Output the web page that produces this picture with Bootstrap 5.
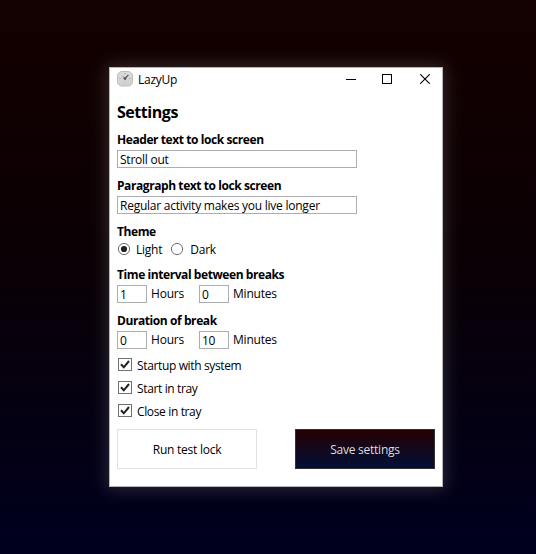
<!DOCTYPE html>
<html lang="en">
<head>
<meta charset="utf-8">
<meta name="viewport" content="width=device-width, initial-scale=1">
<title>LazyUp</title>
<link href="https://cdn.jsdelivr.net/npm/bootstrap@5.3.0/dist/css/bootstrap.min.css" rel="stylesheet">
<style>
  body { min-height: 554px; font: 12px/16px "Open Sans", "Noto Sans", sans-serif; color: #000; background: linear-gradient(#140000 0%, #0a0005 48%, #00001f 100%); letter-spacing: -.24px; overflow: hidden; }
  .app-window { width: 334px; height: 420px; margin: 67px 0 0 109px; border: 1px solid #b9b4b8; box-shadow: 0 0 16px 2px rgba(255,255,255,.16); }
  .title-bar { height: 24px; }
  .app-icon { margin: 0 5px 2px 7px; }
  .win-controls { padding-bottom: 2px; }
  .win-btn { width: 37px; }
  .win-btn.min-btn, .win-btn.close-btn { padding-left: 2px; }
  .content-area { padding: 0 7px; }
  .page-heading { font-size: 16px; line-height: 40px; height: 40px; letter-spacing: -.45px; }
  .field-label { height: 18px; line-height: 15px; font-weight: 700; letter-spacing: -.42px; }
  .field-row { height: 28px; }
  .last-row { height: 27px; }
  .theme-row { height: 25px; padding-right: 8px; }
  .radio-item { height: 14px; margin-right: 8px; }
  .radio-text { margin-left: 5px; padding-top: 1px; }
  .radio-item + .radio-item .radio-text { margin-left: 6px; }
  .text-box { height: 18px; border: 1px solid #abadb3; border-radius: 0; padding: 1px 2px 0; font: inherit; letter-spacing: inherit; line-height: 16px; color: #000; }
  .wide-box { width: 240px; }
  .num-box { width: 30px; }
  .unit-label { width: 52px; padding: 1px 0 0 4px; letter-spacing: -.2px; }
  .check-row { height: 23px; }
  .check-text { margin-left: 4px; letter-spacing: -.36px; }
  .action-row { padding-top: 2px; }
  .action-btn { width: 140px; height: 40px; border-radius: 0; font-size: 12px; letter-spacing: -.25px; padding: 1px 0 0; }
  .test-btn, .test-btn:hover { background: #fff; border: 1px solid #e1e1e1; color: #000; }
  .save-btn, .save-btn:hover { background: linear-gradient(#270000, #001039) border-box; border: 1px solid #323232; color: #ddd; }
  svg { flex: none; display: block; }
</style>
<script src="https://cdn.jsdelivr.net/npm/bootstrap@5.3.0/dist/js/bootstrap.bundle.min.js"></script>
</head>
<body>
<main class="app-window bg-white d-flex flex-column">
  <header class="title-bar d-flex align-items-center">
    <svg class="app-icon" width="16" height="16" viewBox="0 0 16 16">
      <defs><linearGradient id="face" x2="0" y2="1"><stop stop-color="#dcdcdc"/><stop offset="1" stop-color="#cfcfcf"/></linearGradient></defs>
      <rect x=".5" y=".5" width="15" height="14.5" rx="4.5" fill="url(#face)" stroke="#bdbdbd"/>
      <path d="M5.6 5.4 8 7.4" fill="none" stroke="#777"/>
      <path d="M7.6 8 11.4 3.8" fill="none" stroke="#555" stroke-width="1.2"/>
      <circle cx="8" cy="7.6" r="1.3" fill="#555"/>
      <path d="M8 9v4" stroke="#e2bdb8"/>
      <path d="M2.5 7.5h1M12.5 7.5h1M8 2v1" stroke="#999"/>
    </svg>
    <span>LazyUp</span>
    <div class="win-controls d-flex ms-auto">
      <span class="win-btn min-btn d-flex justify-content-center"><svg width="10" height="10" shape-rendering="crispEdges"><path d="M0 5.5h10" stroke="#000"/></svg></span>
      <span class="win-btn d-flex justify-content-center"><svg width="10" height="10" shape-rendering="crispEdges"><path d="M.5.5h9v9h-9z" fill="none" stroke="#000"/></svg></span>
      <span class="win-btn close-btn d-flex justify-content-center"><svg width="10" height="10"><path d="M.2.2l9.6 9.6M9.8.2.2 9.8" stroke="#000" stroke-width="1.1"/></svg></span>
    </div>
  </header>
  <section class="content-area">
    <h1 class="page-heading fw-bold mb-0">Settings</h1>
    <label class="field-label d-block" for="headerText">Header text to lock screen</label>
    <div class="field-row"><input id="headerText" class="text-box wide-box d-block" value="Stroll out"></div>
    <label class="field-label d-block" for="paragraphText">Paragraph text to lock screen</label>
    <div class="field-row"><input id="paragraphText" class="text-box wide-box d-block" value="Regular activity makes you live longer"></div>
    <div class="field-label">Theme</div>
    <div class="theme-row d-flex">
      <span class="radio-item d-flex align-items-center"><svg width="14" height="14"><circle cx="7" cy="7" r="5.6" fill="#fff" stroke="#707070"/><circle cx="7" cy="7" r="3.1" fill="#212121"/></svg><span class="radio-text">Light</span></span>
      <span class="radio-item d-flex align-items-center"><svg width="14" height="14"><circle cx="7" cy="7" r="5.6" fill="#fff" stroke="#707070"/></svg><span class="radio-text">Dark</span></span>
    </div>
    <div class="field-label">Time interval between breaks</div>
    <div class="field-row d-flex">
      <input class="text-box num-box" value="1" aria-label="Interval hours"><span class="unit-label">Hours</span>
      <input class="text-box num-box" value="0" aria-label="Interval minutes"><span class="unit-label">Minutes</span>
    </div>
    <div class="field-label">Duration of break</div>
    <div class="last-row d-flex">
      <input class="text-box num-box" value="0" aria-label="Break hours"><span class="unit-label">Hours</span>
      <input class="text-box num-box" value="10" aria-label="Break minutes"><span class="unit-label">Minutes</span>
    </div>
    <div class="check-row d-flex"><svg width="16" height="14"><rect x="1.5" y=".5" width="13" height="12" fill="#fff" stroke="#707070"/><path d="M4 6.3 6.8 9.3 12 3" fill="none" stroke="#212121" stroke-width="2"/></svg><span class="check-text">Startup with system</span></div>
    <div class="check-row d-flex"><svg width="16" height="14"><rect x="1.5" y=".5" width="13" height="12" fill="#fff" stroke="#707070"/><path d="M4 6.3 6.8 9.3 12 3" fill="none" stroke="#212121" stroke-width="2"/></svg><span class="check-text">Start in tray</span></div>
    <div class="check-row d-flex"><svg width="16" height="14"><rect x="1.5" y=".5" width="13" height="12" fill="#fff" stroke="#707070"/><path d="M4 6.3 6.8 9.3 12 3" fill="none" stroke="#212121" stroke-width="2"/></svg><span class="check-text">Close in tray</span></div>
    <div class="action-row d-flex justify-content-between">
      <button class="btn action-btn test-btn">Run test lock</button>
      <button class="btn action-btn save-btn">Save settings</button>
    </div>
  </section>
</main>
</body>
</html>
